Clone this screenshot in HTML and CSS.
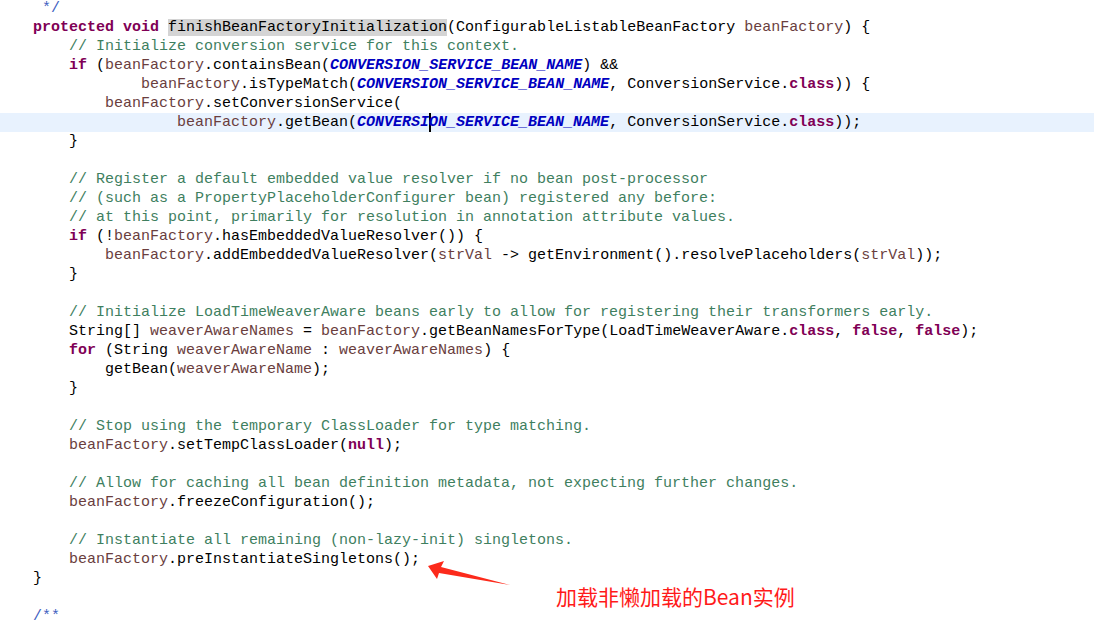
FILE: index.html
```html
<!DOCTYPE html>
<html lang="en">
  <head>
    <meta charset="UTF-8" />
    <meta name="viewport" content="width=device-width, initial-scale=1.0" />
    <title>finishBeanFactoryInitialization</title>
    <link rel="stylesheet" href="styles.css">
  </head>
  <body>
    <div class="editor">
      <div class="line"><span class="doc"> */</span></div>
      <div class="line"><span class="kw">protected</span> <span class="kw">void</span> <span class="sel">finishBeanFactoryInitialization</span>(ConfigurableListableBeanFactory <span class="var">beanFactory</span>) {</div>
      <div class="line">    <span class="cm">// Initialize conversion service for this context.</span></div>
      <div class="line">    <span class="kw">if</span> (<span class="var">beanFactory</span>.containsBean(<span class="const">CONVERSION_SERVICE_BEAN_NAME</span>) &amp;&amp;</div>
      <div class="line">            <span class="var">beanFactory</span>.isTypeMatch(<span class="const">CONVERSION_SERVICE_BEAN_NAME</span>, ConversionService.<span class="kw">class</span>)) {</div>
      <div class="line">        <span class="var">beanFactory</span>.setConversionService(</div>
      <div class="line current">                <span class="var">beanFactory</span>.getBean(<span class="const">CONVERSI<span class="caret"></span>ON_SERVICE_BEAN_NAME</span>, ConversionService.<span class="kw">class</span>));</div>
      <div class="line">    }</div>
      <div class="line"></div>
      <div class="line">    <span class="cm">// Register a default embedded value resolver if no bean post-processor</span></div>
      <div class="line">    <span class="cm">// (such as a PropertyPlaceholderConfigurer bean) registered any before:</span></div>
      <div class="line">    <span class="cm">// at this point, primarily for resolution in annotation attribute values.</span></div>
      <div class="line">    <span class="kw">if</span> (!<span class="var">beanFactory</span>.hasEmbeddedValueResolver()) {</div>
      <div class="line">        <span class="var">beanFactory</span>.addEmbeddedValueResolver(<span class="var">strVal</span> -&gt; getEnvironment().resolvePlaceholders(<span class="var">strVal</span>));</div>
      <div class="line">    }</div>
      <div class="line"></div>
      <div class="line">    <span class="cm">// Initialize LoadTimeWeaverAware beans early to allow for registering their transformers early.</span></div>
      <div class="line">    String[] <span class="var">weaverAwareNames</span> = <span class="var">beanFactory</span>.getBeanNamesForType(LoadTimeWeaverAware.<span class="kw">class</span>, <span class="kw">false</span>, <span class="kw">false</span>);</div>
      <div class="line">    <span class="kw">for</span> (String <span class="var">weaverAwareName</span> : <span class="var">weaverAwareNames</span>) {</div>
      <div class="line">        getBean(<span class="var">weaverAwareName</span>);</div>
      <div class="line">    }</div>
      <div class="line"></div>
      <div class="line">    <span class="cm">// Stop using the temporary ClassLoader for type matching.</span></div>
      <div class="line">    <span class="var">beanFactory</span>.setTempClassLoader(<span class="kw">null</span>);</div>
      <div class="line"></div>
      <div class="line">    <span class="cm">// Allow for caching all bean definition metadata, not expecting further changes.</span></div>
      <div class="line">    <span class="var">beanFactory</span>.freezeConfiguration();</div>
      <div class="line"></div>
      <div class="line">    <span class="cm">// Instantiate all remaining (non-lazy-init) singletons.</span></div>
      <div class="line">    <span class="var">beanFactory</span>.preInstantiateSingletons();</div>
      <div class="line">}</div>
      <div class="line"></div>
      <div class="line"><span class="doc">/**</span></div>
    </div>

    <!-- annotation drawn over the code -->
    <svg class="arrow" width="100" height="40" viewBox="0 0 100 40">
      <polygon points="0,8 16,3 13,9 82,27 11,15 9,21" fill="#fc2a1b" />
    </svg>
    <div class="note">加载非懒加载的Bean实例</div>
  </body>
</html>
```

FILE: styles.css
```css
body {
  margin: 0;
  background-color: #ffffff;
  overflow: hidden;
}
.editor {
  margin-top: -1px;
  font-family: "Liberation Mono", monospace;
  font-size: 15px;
  color: #000000;
}
.line {
  height: 19px;
  line-height: 19px;
  padding-left: 33px;
  white-space: pre;
}
.current {
  background-color: #e8f2fe;
}
.kw {
  color: #7f0055;
  font-weight: bold;
}
.cm {
  color: #3f7f5f;
}
.doc {
  color: #3f5fbf;
}
.const {
  color: #0000c0;
  font-weight: bold;
  font-style: italic;
}
.var {
  color: #6a3e3e;
}
.sel {
  background-color: #d4d4d4;
}
.caret {
  display: inline-block;
  width: 0;
  height: 19px;
  vertical-align: top;
  border-left: 2px solid #000000;
  margin-right: -2px;
}
.arrow {
  position: absolute;
  left: 428px;
  top: 558px;
}
.note {
  position: absolute;
  left: 556px;
  top: 582px;
  font-family: "Noto Sans CJK SC", sans-serif;
  font-size: 21px;
  line-height: 28px;
  color: #ff1a1a;
}
```
